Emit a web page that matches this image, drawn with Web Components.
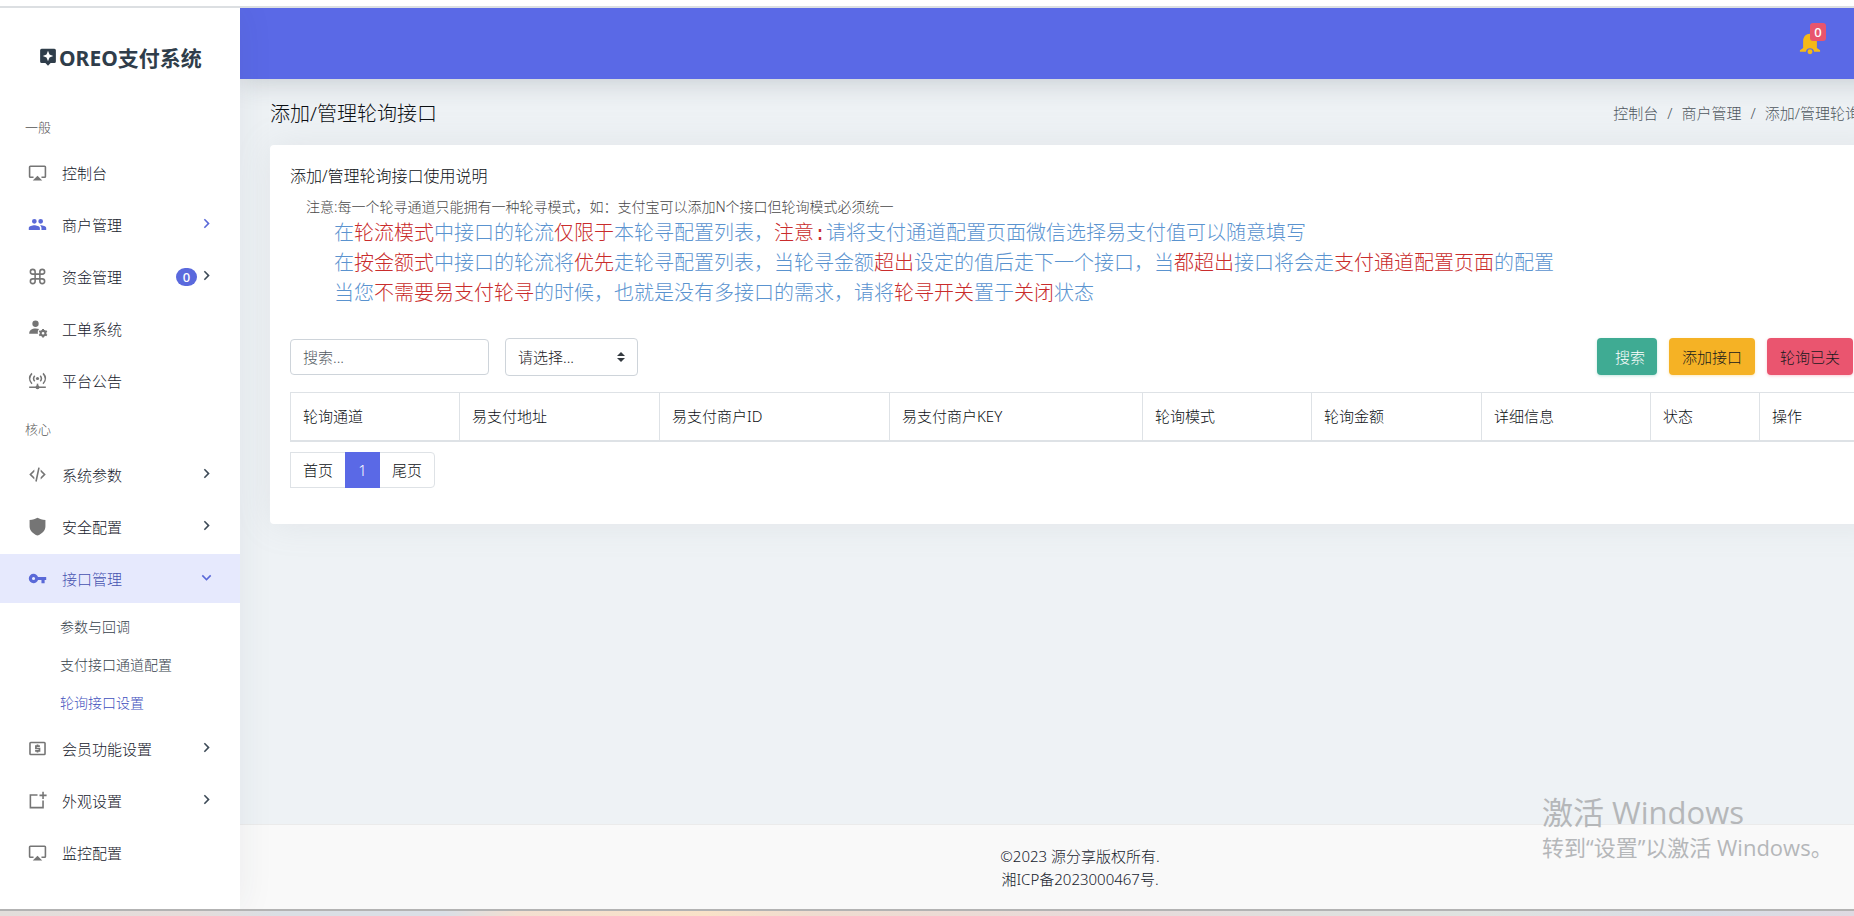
<!DOCTYPE html>
<html lang="zh-CN">
<head>
<meta charset="utf-8">
<title>添加/管理轮询接口</title>
<style>
html, body { margin: 0; height: 100%; }
body { overflow: hidden; font-family: "Noto Sans", "Noto Sans CJK SC", sans-serif; font-weight: 300; font-size: 15px; color: #0c1014; background: #fff; }
</style>
</head>
<body>
<pay-app></pay-app>
<script>
const ICONS = {
  monitor: '<path d="M6,22H18L12,16M21,3H3A2,2 0 0,0 1,5V17A2,2 0 0,0 3,19H7V17H3V5H21V17H17V19H21A2,2 0 0,0 23,17V5A2,2 0 0,0 21,3Z"/>',
  users: '<path d="M16,13C15.71,13 15.38,13 15.03,13.05C16.19,13.89 17,15 17,16.5V19H23V16.5C23,14.17 18.33,13 16,13M8,13C5.67,13 1,14.17 1,16.5V19H15V16.5C15,14.17 10.33,13 8,13M8,11A3,3 0 0,0 11,8A3,3 0 0,0 8,5A3,3 0 0,0 5,8A3,3 0 0,0 8,11M16,11A3,3 0 0,0 19,8A3,3 0 0,0 16,5A3,3 0 0,0 13,8A3,3 0 0,0 16,11Z"/>',
  command: '<path d="M6,2A4,4 0 0,1 10,6V8H14V6A4,4 0 0,1 18,2A4,4 0 0,1 22,6A4,4 0 0,1 18,10H16V14H18A4,4 0 0,1 22,18A4,4 0 0,1 18,22A4,4 0 0,1 14,18V16H10V18A4,4 0 0,1 6,22A4,4 0 0,1 2,18A4,4 0 0,1 6,14H8V10H6A4,4 0 0,1 2,6A4,4 0 0,1 6,2M16,18A2,2 0 0,0 18,20A2,2 0 0,0 20,18A2,2 0 0,0 18,16H16V18M14,10H10V14H14V10M6,16A2,2 0 0,0 4,18A2,2 0 0,0 6,20A2,2 0 0,0 8,18V16H6M8,6A2,2 0 0,0 6,4A2,2 0 0,0 4,6A2,2 0 0,0 6,8H8V6M18,8A2,2 0 0,0 20,6A2,2 0 0,0 18,4A2,2 0 0,0 16,6V8H18Z"/>',
  userCog: '<circle cx="9.500" cy="6" r="4"/><path d="M1.500 18.500C1.500 14 5 12 9.500 12c1.800 0 3.300.2 4.500.7-1.400 1.500-2 3.500-1.400 5.800z"/><circle cx="19" cy="18" r="3" fill="none" stroke="currentColor" stroke-width="2.600"/><g stroke="currentColor" stroke-width="2.400"><path d="M19 12.500v2.500M19 21v2.500M14.200 15.200l2.200 1.300M21.600 19.500l2.200 1.300M14.200 20.800l2.200-1.300M21.600 16.500l2.200-1.300"/></g>',
  antenna: '<g fill="none" stroke="currentColor" stroke-width="1.900"><path d="M5 3C1.300 7 1.300 12 5 16M19 3c3.700 4 3.700 9 0 13M8.500 6c-2 2.400-2 4.600 0 7M15.500 6c2 2.400 2 4.600 0 7M1.500 20.500h21"/></g><path d="M11 16h2v4h-2z"/><circle cx="12" cy="9.500" r="2"/><circle cx="12" cy="20.500" r="2.500"/>',
  code: '<path d="M12.89,3L14.85,3.4L11.11,21L9.15,20.6L12.89,3M19.59,12L16,8.41V5.58L22.42,12L16,18.41V15.58L19.59,12M1.58,12L8,5.58V8.41L4.41,12L8,15.58V18.41L1.58,12Z"/>',
  shield: '<path d="M12 1C9.500 2.600 6 3.400 2 3.700V12c0 5.300 4.500 9.300 10 11.500C17.500 21.300 22 17.300 22 12V3.700C18 3.400 14.500 2.600 12 1z"/>',
  key: '<path d="M7,14A2,2 0 0,1 5,12A2,2 0 0,1 7,10A2,2 0 0,1 9,12A2,2 0 0,1 7,14M12.65,10C11.83,7.67 9.61,6 7,6A6,6 0 0,0 1,12A6,6 0 0,0 7,18C9.61,18 11.83,16.33 12.65,14H17V18H21V14H23V10H12.65Z"/>',
  cash: '<g fill="none" stroke="currentColor" stroke-width="2"><rect x="2.500" y="4.500" width="19" height="15" rx="1"/><path stroke-width="2.200" d="M15 9h-5v3h4.500v3H9M12 7v2M12 15v2"/></g>',
  addBox: '<g fill="none" stroke="currentColor" stroke-width="2"><path d="M12 5H3v16h16v-9M19 1v9M14.500 5.500h9"/></g>',
  right: '<path d="M8.59,16.58L13.17,12L8.59,7.41L10,6L16,12L10,18L8.59,16.58Z"/>',
  down: '<path d="M7.41,8.58L12,13.17L16.59,8.58L18,10L12,16L6,10L7.41,8.58Z"/>',
  logo: '<path fill-rule="evenodd" d="M3.500 1h17a2 2 0 0 1 2 2v15a2 2 0 0 1-2 2h-5L12 23.500 8.500 20h-5a2 2 0 0 1-2-2V3a2 2 0 0 1 2-2zM12 3.500l-2 5-5 2 5 2 2 5 2-5 5-2-5-2z"/>',
  bell: '<path d="M12 2C7.500 2 4.500 5.500 4.500 10v7.500L1 20v1.500h6.500a4.600 4.600 0 0 1 9 0H23V20l-3.500-2.500V10C19.500 5.500 16.500 2 12 2z"/><circle cx="12" cy="21.500" r="2.700"/>'
};

function define(name, html) {
  const tpl = document.createElement('template');
  tpl.innerHTML = html;
  customElements.define(name, class extends HTMLElement {
    constructor() {
      super();
      this.attachShadow({ mode: 'open' }).appendChild(tpl.content.cloneNode(true));
    }
  });
}

customElements.define('pay-icon', class extends HTMLElement {
  connectedCallback() {
    if (this.shadowRoot) return;
    this.attachShadow({ mode: 'open' }).innerHTML = `
      <style>
        :host { display: inline-flex; flex: none; width: 19px; height: 19px; }
        svg { width: 100%; height: 100%; fill: currentColor; overflow: visible; }
      </style>
      <svg viewBox="0 0 24 24" aria-hidden="true">${ICONS[this.getAttribute('name')]}</svg>`;
  }
});

customElements.define('nav-item', class extends HTMLElement {
  connectedCallback() {
    if (this.shadowRoot) return;
    const badge = this.getAttribute('badge');
    const arrow = this.getAttribute('arrow');
    this.attachShadow({ mode: 'open' }).innerHTML = `
      <style>
        :host { display: block; margin-bottom: 3px; --ink: #17222d; --icon: #757575; }
        :host([tone="accent"]) { --icon: #5a69d8; }
        :host([active]) { --ink: #4653b0; --icon: #5a69d8; background: #e6e9fd; }
        a { display: flex; align-items: center; height: 49px; padding: 0 24px 0 28px; color: var(--ink); text-decoration: none; }
        .icon { color: var(--icon); margin-right: 15px; }
        .label { flex: 1; }
        .arrow { width: 19px; height: 19px; margin-bottom: 2px; color: #3d4a57; }
        :host([tone="accent"]) .arrow, :host([active]) .arrow { color: var(--icon); }
        .badge { background: #5a69dd; color: #fff; width: 21px; height: 18px; line-height: 18px; border-radius: 9px; text-align: center; font-size: 13px; font-weight: 500; }
      </style>
      <a href="#"><pay-icon class="icon" name="${this.getAttribute('icon')}"></pay-icon><span class="label"><slot></slot></span>${badge ? `<span class="badge">${badge}</span>` : ''}${arrow ? `<pay-icon class="arrow" name="${arrow}"></pay-icon>` : ''}</a>`;
  }
});

define('nav-heading', `
  <style>:host { display: block; height: 42px; line-height: 42px; padding-left: 25px; font-size: 13px; color: #555; }</style>
  <slot></slot>`);

define('nav-sub', `
  <style>
    :host { display: block; height: 38px; line-height: 38px; padding-left: 60px; font-size: 14px; color: #36414b; }
    :host([active]) { color: #4150bd; }
    a { color: inherit; text-decoration: none; }
  </style>
  <a href="#"><slot></slot></a>`);

define('side-bar', `
  <style>
    :host { display: block; background: #fff; box-shadow: 0 0 35px rgba(49,58,70,.07); z-index: 2; }
    .logo { display: flex; align-items: center; height: 98px; padding-left: 39px; gap: 2px; font-size: 21px; font-weight: 700; color: #2f3d4a; text-decoration: none; }
    .logo pay-icon { width: 18px; height: 18px; }
    .subs { padding: 2px 0; }
  </style>
  <a class="logo" href="#"><pay-icon name="logo"></pay-icon><span>OREO支付系统</span></a>
  <nav>
    <nav-heading>一般</nav-heading>
    <nav-item icon="monitor">控制台</nav-item>
    <nav-item icon="users" arrow="right" tone="accent">商户管理</nav-item>
    <nav-item icon="command" badge="0" arrow="right">资金管理</nav-item>
    <nav-item icon="userCog">工单系统</nav-item>
    <nav-item icon="antenna">平台公告</nav-item>
    <nav-heading>核心</nav-heading>
    <nav-item icon="code" arrow="right">系统参数</nav-item>
    <nav-item icon="shield" arrow="right">安全配置</nav-item>
    <nav-item icon="key" arrow="down" active>接口管理</nav-item>
    <div class="subs">
      <nav-sub>参数与回调</nav-sub>
      <nav-sub>支付接口通道配置</nav-sub>
      <nav-sub active>轮询接口设置</nav-sub>
    </div>
    <nav-item icon="cash" arrow="right">会员功能设置</nav-item>
    <nav-item icon="addBox" arrow="right">外观设置</nav-item>
    <nav-item icon="monitor">监控配置</nav-item>
  </nav>`);

define('top-bar', `
  <style>
    :host { display: flex; justify-content: flex-end; align-items: center; height: 71px; padding: 0 99px 2px 0; box-sizing: border-box; background: #5a69e6; box-shadow: 0 0 30px rgba(49,58,70,.25); z-index: 1; }
    button { position: relative; border: 0; background: none; padding: 0; width: 22px; height: 22px; color: #f5b916; font: inherit; }
    pay-icon { width: 22px; height: 22px; }
    .count { position: absolute; left: 11px; top: -9px; width: 16px; height: 18px; line-height: 18px; border-radius: 3px; background: #e8556d; color: #fff; font-size: 13px; font-weight: 500; text-align: center; }
  </style>
  <button type="button" aria-label="通知"><pay-icon name="bell"></pay-icon><span class="count">0</span></button>`);

define('page-heading', `
  <style>
    :host { display: flex; justify-content: space-between; align-items: center; height: 66px; }
    h1 { margin: 0; font-size: 20px; font-weight: 300; }
    ol { display: flex; margin: 0; padding: 0; list-style: none; color: #50585f; }
    li + li::before { content: "/"; padding: 0 9px; }
    a { color: inherit; text-decoration: none; }
  </style>
  <h1>添加/管理轮询接口</h1>
  <ol><li><a href="#">控制台</a></li><li><a href="#">商户管理</a></li><li>添加/管理轮询接口</li></ol>`);

define('usage-notes', `
  <style>
    :host { display: block; }
    h2 { margin: 0; font-size: 16px; line-height: 22px; font-weight: 300; }
    .sub { margin: 10px 0 0 16px; font-size: 14px; line-height: 20px; color: #484848; }
    .lines { margin: 0 0 0 44px; font-size: 20px; line-height: 30px; color: #5a93cf; font-family: "Noto Sans CJK SC", sans-serif; }
    .lines p { margin: 0; }
    b { font-weight: 300; color: #c92c2c; }
    .colon { font-family: "Liberation Mono", monospace; line-height: 20px; }
  </style>
  <h2>添加/管理轮询接口使用说明</h2>
  <p class="sub">注意:每一个轮寻通道只能拥有一种轮寻模式，如：支付宝可以添加N个接口但轮询模式必须统一</p>
  <div class="lines">
    <p>在<b>轮流模式</b>中接口的轮流<b>仅限于</b>本轮寻配置列表，<b>注意<span class="colon">:</span></b>请将支付通道配置页面微信选择易支付值可以随意填写</p>
    <p>在<b>按金额式</b>中接口的轮流将<b>优先</b>走轮寻配置列表，当轮寻金额<b>超出</b>设定的值后走下一个接口，当<b>都超出</b>接口将会走<b>支付通道配置页面</b>的配置</p>
    <p>当您<b>不需要易支付轮寻</b>的时候，也就是没有多接口的需求，请将<b>轮寻开关</b>置于<b>关闭</b>状态</p>
  </div>`);

define('filter-bar', `
  <style>
    :host { display: flex; align-items: center; justify-content: space-between; margin-top: 31px; height: 38px; }
    .group, .actions { display: flex; align-items: center; }
    .group { gap: 16px; }
    .actions { gap: 12px; margin-right: 17px; align-self: flex-start; }
    input, select, button { font: inherit; box-sizing: border-box; border-radius: 4px; }
    input { width: 199px; height: 36px; border: 1px solid #ced4da; padding: 0 12px; background: #fff; color: #495057; }
    input::placeholder { color: #505860; opacity: 1; }
    .pick { position: relative; display: flex; }
    select { appearance: none; width: 133px; height: 38px; border: 1px solid #ced4da; padding: 0 24px 0 12px; background: #fff; color: #1c2126; }
    .pick svg { position: absolute; right: 13px; top: 14px; width: 8px; height: 10px; pointer-events: none; }
    button { height: 37px; border: 0; padding: 0 13px; color: #161a1d; }
    .find { background: #3fab93; color: #fff; padding: 0 12px 0 18px; box-shadow: 0 1px 3px rgba(63,171,147,.3); }
    .add { background: #f5b225; box-shadow: 0 1px 3px rgba(245,178,37,.3); }
    .off { background: #ea556f; box-shadow: 0 1px 3px rgba(234,85,111,.3); }
  </style>
  <div class="group">
    <input type="text" placeholder="搜索..." aria-label="搜索">
    <span class="pick"><select aria-label="请选择"><option>请选择...</option></select><svg viewBox="0 0 8 10"><path fill="#343a40" d="M0 4l4-4 4 4zM0 6h8l-4 4z"/></svg></span>
  </div>
  <div class="actions"><button type="button" class="find">搜索</button><button type="button" class="add">添加接口</button><button type="button" class="off">轮询已关</button></div>`);

define('channel-table', `
  <style>
    :host { display: block; margin-top: 16px; }
    table { width: 100%; table-layout: fixed; border-collapse: collapse; }
    th { height: 48px; padding: 0 12px 2px; text-align: left; font-weight: 300; border: 1px solid #dee2e6; border-bottom-width: 2px; box-sizing: border-box; }
    .c169 { width: 169px; } .c170 { width: 170px; } .c200 { width: 200px; } .c230 { width: 230px; } .c253 { width: 253px; } .c109 { width: 109px; }
  </style>
  <table>
    <colgroup><col class="c169"><col class="c200"><col class="c230"><col class="c253"><col class="c169"><col class="c170"><col class="c169"><col class="c109"><col></colgroup>
    <thead><tr><th>轮询通道</th><th>易支付地址</th><th>易支付商户ID</th><th>易支付商户KEY</th><th>轮询模式</th><th>轮询金额</th><th>详细信息</th><th>状态</th><th>操作</th></tr></thead>
  </table>`);

define('page-links', `
  <style>
    :host { display: flex; margin-top: 10px; }
    a { box-sizing: border-box; height: 36px; line-height: 34px; padding: 0 12px; border: 1px solid #dee2e6; color: inherit; text-decoration: none; }
    a + a { margin-left: -1px; }
    a:first-child { border-radius: 4px 0 0 4px; }
    a:last-child { border-radius: 0 4px 4px 0; }
    .on { position: relative; width: 35px; text-align: center; background: #5a69e6; border-color: #5a69e6; color: #fff; }
  </style>
  <a href="#">首页</a><a href="#" class="on" aria-current="page">1</a><a href="#">尾页</a>`);

define('page-card', `
  <style>:host { display: block; background: #fff; border-radius: 4px; padding: 20px 20px 36px; box-shadow: 0 0 35px rgba(154,161,171,.15); }</style>
  <slot></slot>`);

define('page-footer', `
  <style>
    :host { display: block; height: 85px; box-sizing: border-box; padding-top: 20px; border-top: 1px solid #ebebeb; background: #f9f9f9; text-align: center; line-height: 23px; color: #17222d; }
    p { margin: 0; }
  </style>
  <p>©2023 源分享版权所有.</p><p>湘ICP备2023000467号.</p>`);

define('activation-note', `
  <style>
    :host { position: absolute; right: 28px; bottom: 54px; z-index: 5; color: #b5b7b9; font-weight: 400; pointer-events: none; font-family: "Open Sans", "Noto Sans CJK SC", sans-serif; }
    p { margin: 0; width: 284px; white-space: nowrap; }
    .big { font-size: 31px; line-height: 40px; }
    .small { font-size: 22px; line-height: 30px; }
  </style>
  <p class="big">激活 Windows</p><p class="small">转到“设置”以激活 Windows。</p>`);

define('pay-app', `
  <style>
    :host { display: flex; flex-direction: column; height: 100vh; position: relative; overflow: hidden; }
    .top { flex: none; height: 6px; border-bottom: 2px solid #dcdfe2; }
    .desk { flex: none; height: 5px; border-top: 2px solid #b3b3b3; background: linear-gradient(90deg, #e2dedb, #e6dcda 10%, #dadfe4 15%, #dadfe6 24%, #f3dfd0 28%, #f9e2c8 38%, #efdcd0 44%, #e8dada 60%, #dfe0de 70%, #dfe3e0 80%, #d8dde6 92%, #dfdae2); }
    /* the page is wider than the window and scrolls off its right edge */
    .page { flex: 1; min-height: 0; display: grid; grid-template-columns: 240px 1fr; margin-right: -66px; overflow: hidden; }
    .body { display: flex; flex-direction: column; background: #eef2f5; min-width: 0; }
    .content { flex: 1; padding: 0 30px; }
  </style>
  <div class="top"></div>
  <div class="page">
    <side-bar></side-bar>
    <div class="body">
      <top-bar></top-bar>
      <main class="content">
        <page-heading></page-heading>
        <page-card>
          <usage-notes></usage-notes>
          <filter-bar></filter-bar>
          <channel-table></channel-table>
          <page-links></page-links>
        </page-card>
      </main>
      <page-footer></page-footer>
    </div>
  </div>
  <div class="desk"></div>
  <activation-note></activation-note>`);
</script>
</body>
</html>
